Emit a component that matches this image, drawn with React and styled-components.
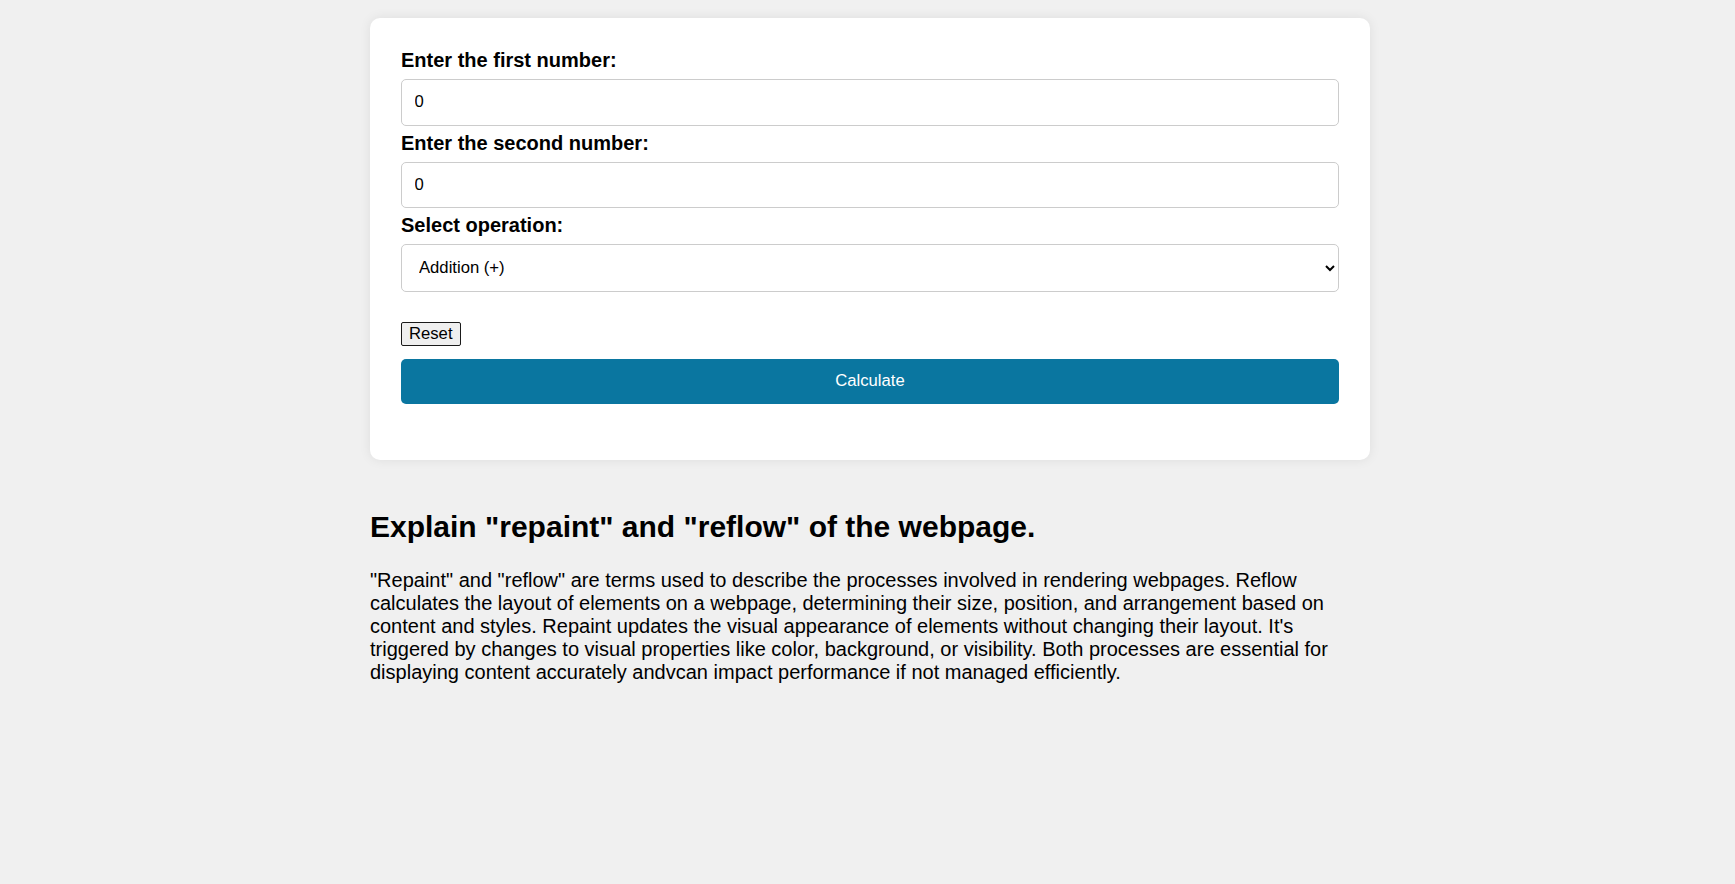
import React, { useState } from "react";
import styled, { createGlobalStyle } from "styled-components";

const GlobalStyle = createGlobalStyle`
  html, body {
    margin: 0;
    padding: 0;
    background: #f0f0f0;
  }
  body {
    font-family: "Liberation Sans", Arial, sans-serif;
    color: #000;
  }
`;

const Page = styled.div`
  display: flex;
  flex-direction: column;
  width: 1000px;
  margin: 0 auto;
  padding: 18px 0 40px 5px;
`;

const Card = styled.form`
  background: #fff;
  border-radius: 10px;
  box-shadow: 0 0 12px rgba(0, 0, 0, 0.08);
  padding: 31px;
  margin-bottom: 25px;
  display: flex;
  flex-direction: column;
`;

const Label = styled.label`
  display: block;
  font-size: 20px;
  line-height: 23px;
  font-weight: 700;
  margin-bottom: 7px;
`;

const Field = styled.div`
  display: flex;
  flex-direction: column;
  margin-bottom: ${(p) => (p.$gap !== undefined ? p.$gap : 6)}px;
`;

const NumberInput = styled.input`
  box-sizing: border-box;
  height: 46.5px;
  width: 100%;
  padding: 0 12.5px;
  border: 1px solid #ccc;
  border-radius: 5px;
  font-family: "Liberation Sans", Arial, sans-serif;
  font-size: 16.67px;
  color: #000;
  background: #fff;
  outline: none;
`;

const Select = styled.select`
  box-sizing: border-box;
  height: 47.5px;
  width: 100%;
  padding: 0 8px 0 13px;
  border: 1px solid #ccc;
  border-radius: 5px;
  font-family: "Liberation Sans", Arial, sans-serif;
  font-size: 16.67px;
  color: #000;
  background: #fff;
  outline: none;
`;

const ResetButton = styled.button`
  align-self: flex-start;
  box-sizing: border-box;
  height: 23.5px;
  padding: 0 7px;
  margin-top: 30.5px;
  background: #efefef;
  border: 1px solid #1a1a1a;
  border-radius: 2px;
  font-family: "Liberation Sans", Arial, sans-serif;
  font-size: 16.67px;
  line-height: 21px;
  color: #000;
`;

const CalcButton = styled.button`
  box-sizing: border-box;
  height: 44.7px;
  width: 100%;
  margin-top: 13.5px;
  margin-bottom: 25.3px;
  border: none;
  border-radius: 5px;
  background: #0a76a0;
  color: #fff;
  font-family: "Liberation Sans", Arial, sans-serif;
  font-size: 16.67px;
`;

const Article = styled.section`
  display: block;
  width: 100%;
`;

const Heading = styled.h2`
  font-size: 30px;
  line-height: 34.5px;
  font-weight: 700;
  margin: 25px 0 25px;
`;

const Paragraph = styled.p`
  font-size: 20px;
  line-height: 23px;
  margin: 20px 0;
`;

export default function App() {
  const [a, setA] = useState("0");
  const [b, setB] = useState("0");
  const [op, setOp] = useState("add");

  return (
    <>
      <GlobalStyle />
      <Page>
        <Card onSubmit={(e) => e.preventDefault()}>
          <Field>
            <Label htmlFor="first">Enter the first number:</Label>
            <NumberInput id="first" type="number" value={a} onChange={(e) => setA(e.target.value)} />
          </Field>
          <Field>
            <Label htmlFor="second">Enter the second number:</Label>
            <NumberInput id="second" type="number" value={b} onChange={(e) => setB(e.target.value)} />
          </Field>
          <Field $gap={0}>
            <Label htmlFor="op">Select operation:</Label>
            <Select id="op" value={op} onChange={(e) => setOp(e.target.value)}>
              <option value="add">Addition (+)</option>
              <option value="sub">Subtraction (-)</option>
              <option value="mul">Multiplication (*)</option>
              <option value="div">Division (/)</option>
            </Select>
          </Field>
          <ResetButton type="button" onClick={() => { setA("0"); setB("0"); setOp("add"); }}>
            Reset
          </ResetButton>
          <CalcButton type="submit">Calculate</CalcButton>
        </Card>
        <Article>
          <Heading>Explain "repaint" and "reflow" of the webpage.</Heading>
          <Paragraph>
            "Repaint" and "reflow" are terms used to describe the processes involved in rendering webpages. Reflow
            calculates the layout of elements on a webpage, determining their size, position, and arrangement based on
            content and styles. Repaint updates the visual appearance of elements without changing their layout. It's
            triggered by changes to visual properties like color, background, or visibility. Both processes are essential
            for displaying content accurately andvcan impact performance if not managed efficiently.
          </Paragraph>
        </Article>
      </Page>
    </>
  );
}
